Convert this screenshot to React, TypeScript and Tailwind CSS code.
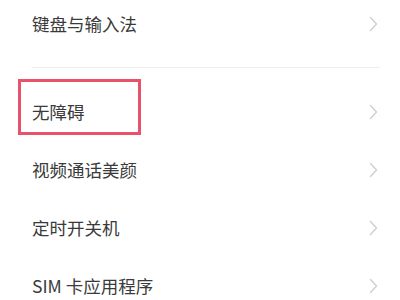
import React from "react"

function Chevron() {
  return (
    <svg width="9" height="16" viewBox="0 0 9 16" className="shrink-0">
      <path d="M1.5 1.5 L7.5 8 L1.5 14.5" fill="none" stroke="#cfcfcf" strokeWidth="1.4" strokeLinecap="round" strokeLinejoin="round" />
    </svg>
  )
}

function Row({ label, height, children }: { label: string; height: string; children?: React.ReactNode }) {
  return (
    <div className={`relative flex items-center justify-between pl-[32px] pr-[22px] ${height}`}>
      <span className="text-[17.5px] leading-none text-[#3a3a3a]">{label}</span>
      <Chevron />
      {children}
    </div>
  )
}

export default function App() {
  return (
    <div
      className="w-[400px] h-[300px] overflow-hidden bg-white"
      style={{ fontFamily: '"Noto Sans CJK SC", "Noto Sans", sans-serif' }}
    >
      <Row label="键盘与输入法" height="h-[48px]" />
      <div className="mt-[19px] mb-[15px] ml-[32px] mr-[20px] h-px bg-[#ededed]" />
      <Row label="无障碍" height="h-[58px]">
        <div className="absolute left-[18px] top-[-4px] h-[56px] w-[123px] border-[3.5px] border-[#e8536b]" />
      </Row>
      <Row label="视频通话美颜" height="h-[58px]" />
      <Row label="定时开关机" height="h-[58px]" />
      <Row label="SIM 卡应用程序" height="h-[58px]" />
    </div>
  )
}
